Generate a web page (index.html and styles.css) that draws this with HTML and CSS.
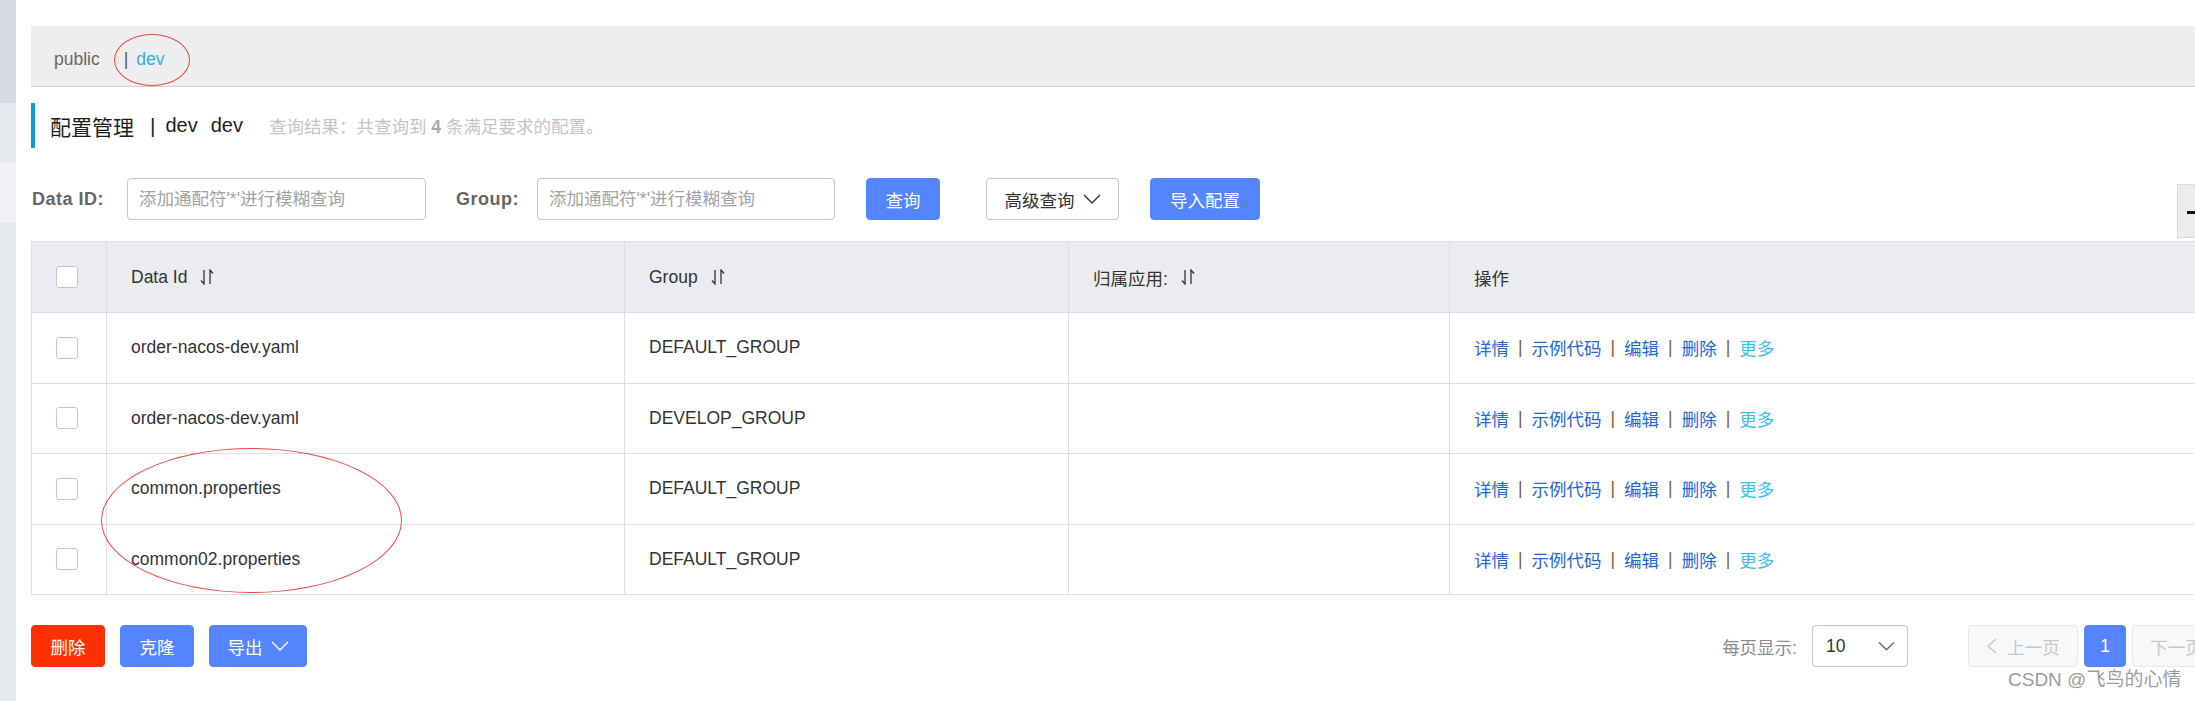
FILE: index.html
```html
<!DOCTYPE html>
<html lang="zh-CN">
<head>
<meta charset="utf-8">
<title>配置管理</title>
<link rel="stylesheet" href="styles.css">
</head>
<body>
<div class="layout">
  <aside class="sidebar">
    <div class="band band-a"></div>
    <div class="band band-b"></div>
    <div class="band band-c"></div>
    <div class="band band-d"></div>
  </aside>
  <main class="main">
    <div class="ns-bar">
      <span class="ns-item">public</span>
      <span class="ns-sep">|</span>
      <span class="ns-item ns-active">dev</span>
    </div>

    <div class="page-title">
      <span class="title-main">配置管理</span>
      <span class="title-sep">|</span>
      <span class="title-ns">dev</span>
      <span class="title-ns title-ns-desc">dev</span>
      <span class="title-summary">查询结果：共查询到 <strong>4</strong> 条满足要求的配置。</span>
    </div>

    <div class="search-row">
      <label class="field-label label-id">Data ID:</label>
      <input class="text-input input-id" type="text" placeholder="添加通配符'*'进行模糊查询">
      <label class="field-label label-group">Group:</label>
      <input class="text-input input-group" type="text" placeholder="添加通配符'*'进行模糊查询">
      <button class="btn btn-primary btn-query">查询</button>
      <button class="btn btn-normal btn-advanced">高级查询<svg class="chev" viewBox="0 0 18 10" width="18" height="10"><polyline points="1,1 9,9 17,1" fill="none" stroke="#333" stroke-width="1.4"/></svg></button>
      <button class="btn btn-primary btn-import">导入配置</button>
    </div>

    <div class="table">
      <div class="tr thead">
        <div class="td td-check"><span class="checkbox"></span></div>
        <div class="td">Data Id<svg class="sort-icon" viewBox="0 0 14 16" width="14" height="16"><path d="M4 1V15L1 11.5M10 15V1L13 4.5" fill="none" stroke="#333" stroke-width="1.3"/></svg></div>
        <div class="td">Group<svg class="sort-icon" viewBox="0 0 14 16" width="14" height="16"><path d="M4 1V15L1 11.5M10 15V1L13 4.5" fill="none" stroke="#333" stroke-width="1.3"/></svg></div>
        <div class="td">归属应用:<svg class="sort-icon" viewBox="0 0 14 16" width="14" height="16"><path d="M4 1V15L1 11.5M10 15V1L13 4.5" fill="none" stroke="#333" stroke-width="1.3"/></svg></div>
        <div class="td">操作</div>
      </div>
      <div class="tr">
        <div class="td td-check"><span class="checkbox"></span></div>
        <div class="td">order-nacos-dev.yaml</div>
        <div class="td">DEFAULT_GROUP</div>
        <div class="td"></div>
        <div class="td actions"><a>详情</a><span class="sep">|</span><a>示例代码</a><span class="sep">|</span><a>编辑</a><span class="sep">|</span><a>删除</a><span class="sep">|</span><a class="more">更多</a></div>
      </div>
      <div class="tr">
        <div class="td td-check"><span class="checkbox"></span></div>
        <div class="td">order-nacos-dev.yaml</div>
        <div class="td">DEVELOP_GROUP</div>
        <div class="td"></div>
        <div class="td actions"><a>详情</a><span class="sep">|</span><a>示例代码</a><span class="sep">|</span><a>编辑</a><span class="sep">|</span><a>删除</a><span class="sep">|</span><a class="more">更多</a></div>
      </div>
      <div class="tr">
        <div class="td td-check"><span class="checkbox"></span></div>
        <div class="td">common.properties</div>
        <div class="td">DEFAULT_GROUP</div>
        <div class="td"></div>
        <div class="td actions"><a>详情</a><span class="sep">|</span><a>示例代码</a><span class="sep">|</span><a>编辑</a><span class="sep">|</span><a>删除</a><span class="sep">|</span><a class="more">更多</a></div>
      </div>
      <div class="tr">
        <div class="td td-check"><span class="checkbox"></span></div>
        <div class="td">common02.properties</div>
        <div class="td">DEFAULT_GROUP</div>
        <div class="td"></div>
        <div class="td actions"><a>详情</a><span class="sep">|</span><a>示例代码</a><span class="sep">|</span><a>编辑</a><span class="sep">|</span><a>删除</a><span class="sep">|</span><a class="more">更多</a></div>
      </div>
    </div>

    <div class="bottom-bar">
      <div class="batch-actions">
        <button class="btn btn-danger btn-small">删除</button>
        <button class="btn btn-primary btn-small">克隆</button>
        <button class="btn btn-primary btn-export">导出<svg class="chev" viewBox="0 0 18 10" width="18" height="10"><polyline points="1,1 9,9 17,1" fill="none" stroke="#fff" stroke-width="1.4"/></svg></button>
      </div>
      <div class="pager">
        <span class="page-size-label">每页显示:</span>
        <div class="select"><span>10</span><svg viewBox="0 0 18 10" width="17" height="10"><polyline points="1,1 9,9 17,1" fill="none" stroke="#666" stroke-width="1.3"/></svg></div>
        <div class="pages">
          <button class="page-btn page-prev"><svg viewBox="0 0 11 16" width="11" height="16"><polyline points="10,1 2,8 10,15" fill="none" stroke="#c8c8c8" stroke-width="1.4"/></svg>上一页</button>
          <button class="page-btn page-current">1</button>
          <button class="page-btn page-next">下一页<svg viewBox="0 0 11 16" width="11" height="16"><polyline points="1,1 9,8 1,15" fill="none" stroke="#c8c8c8" stroke-width="1.4"/></svg></button>
        </div>
      </div>
    </div>
  </main>
</div>

<div class="float-tab"><span class="float-dash"></span></div>
<div class="mark mark-ns"></div>
<div class="mark mark-rows"></div>
<div class="watermark">CSDN @飞鸟的心情</div>
</body>
</html>
```

FILE: styles.css
```css
* {
  box-sizing: border-box;
}

html,
body {
  margin: 0;
  padding: 0;
}

body {
  width: 2195px;
  height: 701px;
  overflow: hidden;
  position: relative;
  background: #ffffff;
  font-family: "Liberation Sans", "Noto Sans CJK SC", sans-serif;
  font-size: 17.5px;
  color: #333333;
}

.layout {
  display: flex;
  height: 701px;
}

/* left navigation edge */
.sidebar {
  width: 16px;
  flex-shrink: 0;
  display: flex;
  flex-direction: column;
}

.band-a {
  height: 103px;
  background: #d7dbe3;
}

.band-b {
  height: 60px;
  background: #e6e9ee;
}

.band-c {
  height: 60px;
  background: #eff1f4;
}

.band-d {
  flex: 1;
  background: #e6e9ee;
}

.main {
  width: 2211px;
  flex-shrink: 0;
  margin-left: 15px;
  padding-top: 26px;
}

/* namespace bar */
.ns-bar {
  height: 61px;
  background: #eeeeee;
  border-bottom: 1px solid #cfcfcf;
  display: flex;
  align-items: center;
  padding: 7px 0 0 23px;
  color: #666666;
}

.ns-sep {
  margin: 0 8px 0 24px;
  color: #555555;
}

.ns-active {
  color: #2fb0e0;
}

/* page title */
.page-title {
  margin-top: 16px;
  height: 45px;
  border-left: 4px solid #0a9ad4;
  padding-left: 15px;
  display: flex;
  align-items: center;
  color: #1e1e1e;
}

.title-main {
  font-size: 21px;
}

.title-sep {
  font-size: 21px;
  margin: 0 10px 0 16px;
}

.title-ns {
  font-size: 20px;
}

.title-ns-desc {
  margin-left: 13px;
}

.title-summary {
  margin-left: 26px;
  color: #c4c4c4;
}

.title-summary strong {
  color: #aaaaaa;
}

/* search form */
.search-row {
  margin-top: 30px;
  height: 42px;
  display: flex;
  align-items: center;
}

.field-label {
  font-size: 18px;
  font-weight: bold;
  color: #666666;
  letter-spacing: 0.5px;
}

.label-id {
  width: 96px;
  padding-left: 1px;
}

.label-group {
  width: 81px;
  margin-left: 30px;
}

.text-input {
  height: 42px;
  border: 1px solid #c4c6cf;
  border-radius: 4px;
  padding: 0 11px;
  font-family: inherit;
  font-size: 17.5px;
  color: #333333;
  outline: none;
  background: #ffffff;
}

.text-input::placeholder {
  color: #a3a3a3;
}

.input-id {
  width: 299px;
}

.input-group {
  width: 298px;
}

.btn {
  height: 42px;
  border-radius: 4px;
  font-family: inherit;
  font-size: 17.5px;
  display: inline-flex;
  align-items: center;
  justify-content: center;
  padding: 0;
  cursor: pointer;
}

.btn-primary {
  background: #5584ff;
  border: 1px solid #5584ff;
  color: #ffffff;
}

.btn-danger {
  background: #ff3000;
  border: 1px solid #ff3000;
  color: #ffffff;
}

.btn-normal {
  background: #ffffff;
  border: 1px solid #c4c6cf;
  color: #333333;
}

.btn-query {
  width: 74px;
  margin-left: 31px;
}

.btn-advanced {
  width: 133px;
  margin-left: 46px;
}

.btn-import {
  width: 110px;
  margin-left: 31px;
}

.chev {
  margin-left: 8px;
}

/* table */
.table {
  margin-top: 21px;
  border-top: 1px solid #dcdee3;
  border-left: 1px solid #dcdee3;
}

.tr {
  display: grid;
  grid-template-columns: 74px 518px 444px 381px 1fr;
  height: 70.5px;
  border-bottom: 1px solid #dcdee3;
}

.thead {
  height: 71px;
  background: #ebecf0;
}

.td {
  display: flex;
  align-items: center;
  padding: 0 0 0 24px;
  border-left: 1px solid #dcdee3;
  white-space: nowrap;
}

.td-check {
  border-left: none;
}

.checkbox {
  width: 22px;
  height: 22px;
  border: 1px solid #c4c6cf;
  border-radius: 3px;
  background: #ffffff;
}

.sort-icon {
  margin-left: 13px;
}

.actions a {
  color: #2468d6;
}

.actions a.more {
  color: #3cc0e8;
}

.actions .sep {
  margin: 0 9px;
  color: #7a5c3e;
}

/* bottom bar */
.bottom-bar {
  margin-top: 30px;
  height: 42px;
  display: flex;
  justify-content: space-between;
  align-items: center;
}

.batch-actions {
  display: flex;
  gap: 15px;
}

.btn-small {
  width: 74px;
}

.btn-export {
  width: 98px;
}

.pager {
  display: flex;
  align-items: center;
}

.page-size-label {
  color: #8c8c8c;
}

.select {
  width: 96px;
  height: 42px;
  margin-left: 15px;
  border: 1px solid #c4c6cf;
  border-radius: 4px;
  display: flex;
  align-items: center;
  justify-content: space-between;
  padding: 0 12px 0 13px;
  color: #333333;
}

.pages {
  display: flex;
  gap: 6px;
  margin-left: 60px;
}

.page-btn {
  height: 42px;
  border-radius: 4px;
  font-family: inherit;
  font-size: 17.5px;
  display: inline-flex;
  align-items: center;
  justify-content: center;
  padding: 0;
}

.page-prev,
.page-next {
  width: 110px;
  background: #f7f8fa;
  border: 1px solid #e6e7eb;
  color: #c8c8c8;
  gap: 10px;
}

.page-current {
  width: 42px;
  background: #5584ff;
  border: 1px solid #5584ff;
  color: #ffffff;
}

/* floating widget cut by the right edge */
.float-tab {
  position: absolute;
  left: 2177px;
  top: 184px;
  width: 40px;
  height: 54px;
  background: #ececec;
  border: 1px solid #d8d8d8;
}

.float-dash {
  position: absolute;
  left: 9px;
  top: 26px;
  width: 20px;
  height: 3px;
  background: #111111;
}

/* red annotation ellipses */
.mark {
  position: absolute;
  border: 1px solid #ec4646;
  border-radius: 50%;
}

.mark-ns {
  left: 114px;
  top: 34px;
  width: 76px;
  height: 52px;
}

.mark-rows {
  left: 101px;
  top: 448px;
  width: 301px;
  height: 145px;
}

.watermark {
  position: absolute;
  left: 2008px;
  top: 670px;
  font-size: 19px;
  line-height: 1.1;
  color: #9c9c9c;
  white-space: nowrap;
}
```
